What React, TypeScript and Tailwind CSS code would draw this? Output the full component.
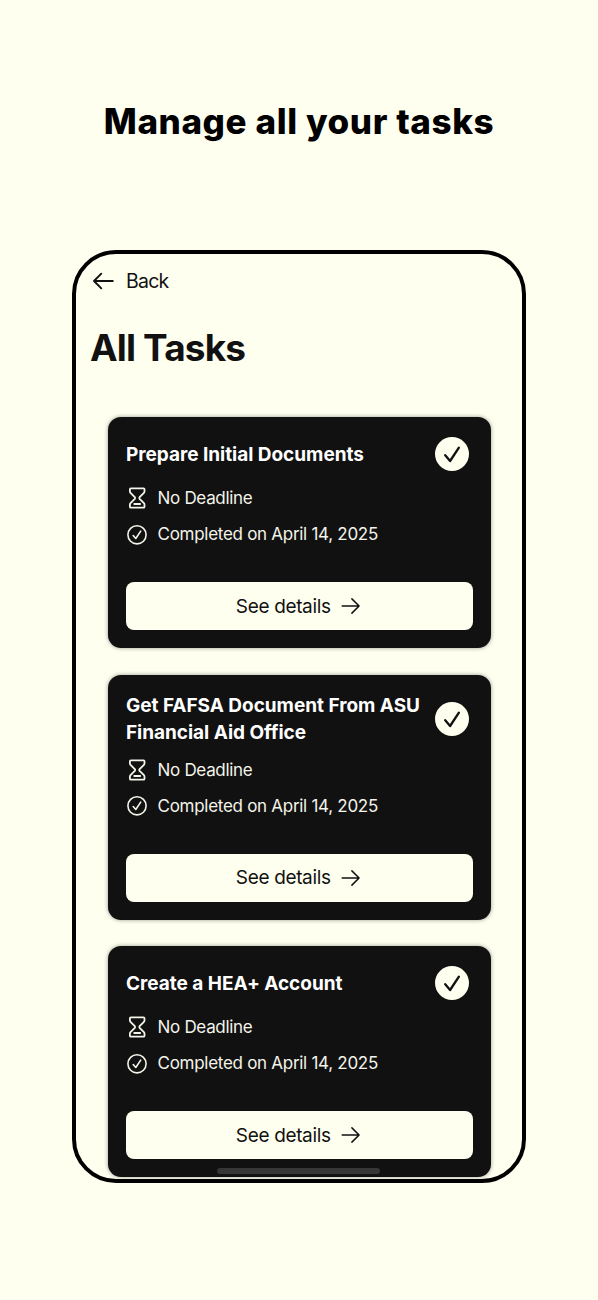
type Task = {
  title: string;
  deadline: string;
  completed: string;
};

const tasks: Task[] = [
  {
    title: 'Prepare Initial Documents',
    deadline: 'No Deadline',
    completed: 'Completed on April 14, 2025',
  },
  {
    title: 'Get FAFSA Document From ASU Financial Aid Office',
    deadline: 'No Deadline',
    completed: 'Completed on April 14, 2025',
  },
  {
    title: 'Create a HEA+ Account',
    deadline: 'No Deadline',
    completed: 'Completed on April 14, 2025',
  },
];

const stroke = {
  fill: 'none',
  stroke: 'currentColor',
  strokeLinecap: 'round',
  strokeLinejoin: 'round',
} as const;

function BackArrow() {
  return (
    <svg className="h-5 w-[22px]" viewBox="0 0 22 20" strokeWidth="1.9" {...stroke}>
      <path d="M20.8 10H2M9.3 2.7 2 10l7.3 7.3" />
    </svg>
  );
}

function ForwardArrow() {
  return (
    <svg className="h-[18px] w-5" viewBox="0 0 20 18" strokeWidth="1.5" {...stroke}>
      <path d="M1.2 9h16.9M10.9 1.9 18.1 9l-7.2 7.1" />
    </svg>
  );
}

function Hourglass() {
  return (
    <svg className="h-[22px] w-[22px]" viewBox="0 0 22 22" strokeWidth="1.8" {...stroke}>
      <path d="M4.9 1.3h12.6q1 0 1 1v2q0 .9-.6 1.5L13.6 10.2q-.7.8 0 1.6l4.3 4.4q.6.6.6 1.5v2q0 1-1 1H4.9q-1 0-1-1v-2q0-.9.6-1.500l4.300-4.400q.7-.8 0-1.600L4.500 5.800q-.6-.6-.6-1.500v-2q0-1 1-1Z" />
      <path d="M8.2 17h6" />
    </svg>
  );
}

function CheckCircle() {
  return (
    <svg className="h-[22px] w-[22px]" viewBox="0 0 22 22" strokeWidth="1.6" {...stroke}>
      <circle cx="11" cy="10.8" r="9.1" />
      <path d="m7.2 11.5 2.6 3 4.9-7.4" />
    </svg>
  );
}

function DoneBadge() {
  return (
    <span className="flex size-[34px] shrink-0 items-center justify-center rounded-full bg-[#fffff0] text-[#111]">
      <svg className="size-[34px]" viewBox="0 0 34 34" strokeWidth="2.3" {...stroke}>
        <path d="m10.2 18.2 4.9 5.8 8.8-13.4" />
      </svg>
    </span>
  );
}

function TaskCard({ task }: { task: Task }) {
  return (
    <article className="rounded-[13px] bg-[#111] px-[18px] pt-[17px] pb-[18px] text-[#f4f4ea] shadow-[0_0_4px_rgba(0,0,0,0.4)]">
      <div className="flex min-h-10 items-center justify-between pr-[3.5px]">
        <h2 className="w-[302px] text-[19px] leading-[27px] font-bold tracking-[-0.03px] text-white">{task.title}</h2>
        <DoneBadge />
      </div>
      <div className="mt-[6px] flex h-9 items-center gap-[9.5px] text-[17px] tracking-[-0.3px]">
        <Hourglass />
        <span className="pt-[1.5px]">{task.deadline}</span>
      </div>
      <div className="flex h-[37px] items-center gap-[9.5px] text-[17px] tracking-[-0.28px]">
        <CheckCircle />
        <span className="pt-px">{task.completed}</span>
      </div>
      <button className="mt-[29px] flex h-12 w-full items-center justify-center gap-[10px] rounded-lg bg-[#fffff0] pr-[2px] text-[19px] tracking-[-0.35px] text-[#111]">
        <span className="pt-[2px]">See details</span>
        <ForwardArrow />
      </button>
    </article>
  );
}

export default function App() {
  return (
    <div className="h-[1300px] w-[598px] overflow-hidden bg-[#fffff0] pt-[100px] font-['Inter',sans-serif]">
      <h1 className="h-[150px] text-center text-[35px] leading-[42px] font-extrabold tracking-[0.6px] whitespace-nowrap text-black">
        Manage all your tasks
      </h1>

      <main className="relative mx-[72px] h-[933px] overflow-hidden rounded-[44px] border-4 border-black text-[#111]">
        <nav className="flex h-[54px] items-center gap-[12px] pl-4 text-[19.5px] tracking-[-0.75px]">
          <BackArrow />
          <span className="pt-[2px]">Back</span>
        </nav>
        <h2 className="mt-[16px] h-[93px] pl-[14px] text-[37px] leading-[48px] font-bold tracking-[-0.85px]">All Tasks</h2>
        <div className="flex flex-col gap-[26.5px] pr-[31.5px] pl-8">
          {tasks.map((task) => (
            <TaskCard key={task.title} task={task} />
          ))}
        </div>

        {/* Home indicator */}
        <div className="absolute bottom-[5px] left-[141px] h-[6px] w-[163px] rounded-full bg-[#363636]" />
      </main>
    </div>
  );
}
